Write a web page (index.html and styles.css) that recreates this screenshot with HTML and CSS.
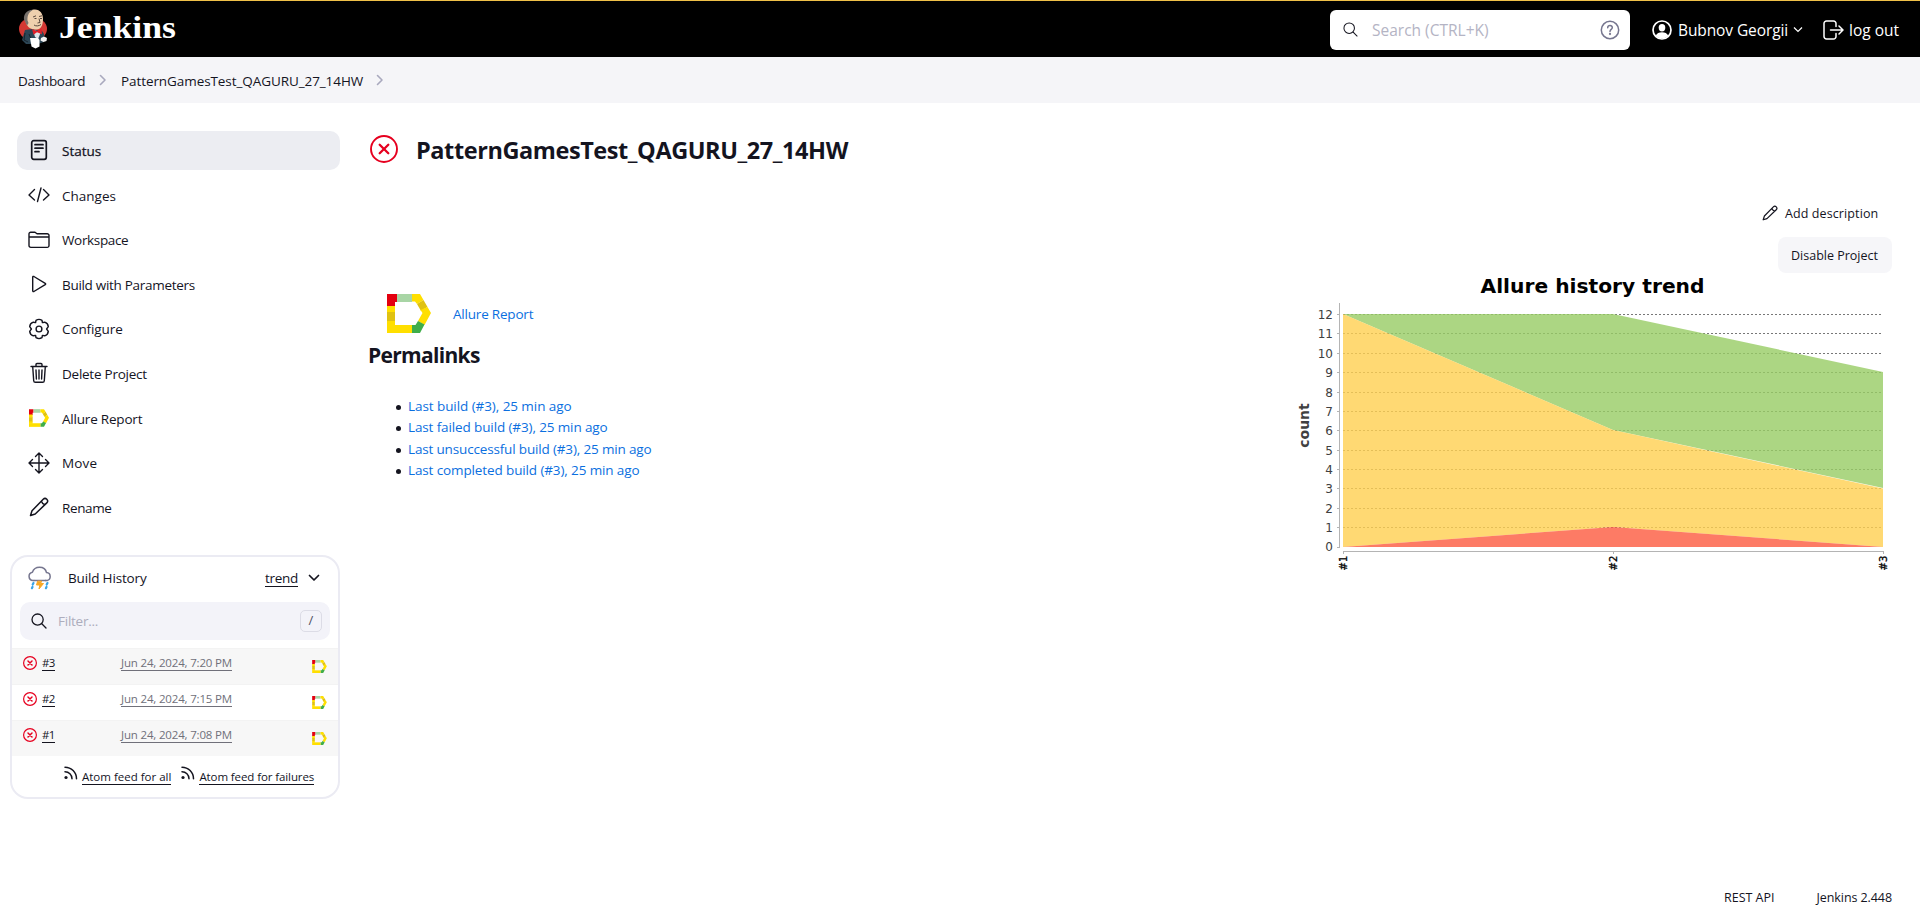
FILE: index.html
```html
<!DOCTYPE html>
<html lang="en">
<head>
<meta charset="utf-8">
<title>PatternGamesTest_QAGURU_27_14HW [Jenkins]</title>
<link rel="stylesheet" href="styles.css">
</head>
<body>
<svg class="defs" width="0" height="0" aria-hidden="true">
  <symbol id="allure" viewBox="0 0 44 39">
    <path d="M0 0h10v8H8v5H0z" fill="#e3000f"/>
    <path d="M10 0h15v8H10z" fill="#a8d5a5"/>
    <path d="M25 0h8l3.500 6-6.500 4-2-2.500h-3z" fill="#ffdf00"/>
    <path d="M36.500 6l4 7-6.500 4-4-7z" fill="#e0c211"/>
    <path d="M40.500 13l3.500 6-6.500 12-6.500-4 4.500-8-2-3z" fill="#ffdf00"/>
    <path d="M31 27l6.500 3.500-4.500 8.500h-8v-8h3.500z" fill="#3fae49"/>
    <path d="M0 31h25v8H0z" fill="#ffdf00"/>
    <path d="M0 12h8v7H0zM0 26h8v6H0z" fill="#ffdf00"/>
    <path d="M0 18h8v9H0z" fill="#e0c211"/>
  </symbol>
  <symbol id="failed" viewBox="0 0 28 28">
    <g fill="none" stroke="#e6001f" stroke-linecap="round"><circle cx="14" cy="14" r="13" stroke-width="1.900"/><path d="M9.700 9.700l8.600 8.600M18.300 9.700l-8.600 8.600" stroke-width="2.300"/></g>
  </symbol>
  <symbol id="failed-sm" viewBox="0 0 14 14">
    <g fill="none" stroke="#e6001f" stroke-linecap="round"><circle cx="7" cy="7" r="6.400" stroke-width="1.200"/><path d="M5 5l4 4M9 5l-4 4" stroke-width="1.500"/></g>
  </symbol>
  <symbol id="pencil" viewBox="0 0 20 20">
    <path d="M1.500 18.500l1.500-4.700L14.200 2.300a2.500 2.500 0 0 1 3.600 3.600L6.200 17zM12.400 4.200c.6 1.800 1.600 2.900 3.500 3.500" fill="none" stroke="currentColor" stroke-width="1.500" stroke-linejoin="round"/>
  </symbol>
  <symbol id="lens" viewBox="0 0 16 16">
    <g fill="none" stroke="currentColor" stroke-linecap="round"><circle cx="6.600" cy="6.600" r="5.600"/><path d="M10.800 10.800l4.200 4.200"/></g>
  </symbol>
  <symbol id="rss" viewBox="0 0 14 14">
    <g fill="none" stroke="currentColor" stroke-width="1.500" stroke-linecap="round"><path d="M1 1.200A11.500 11.500 0 0 1 12.500 12.700M1 5.700a7 7 0 0 1 7 7"/></g><circle cx="2" cy="11.500" r="1.600" fill="currentColor"/>
  </symbol>
  <symbol id="crumb" viewBox="0 0 8 12">
    <path d="M1.500 1.500L6 6l-4.500 4.500" fill="none" stroke="#a9a9be" stroke-width="1.600" stroke-linecap="round" stroke-linejoin="round"/>
  </symbol>
</svg>

<header class="top">
  <a class="brand">
    <svg class="butler" width="30" height="41" viewBox="0 0 30 41">
      <ellipse cx="14" cy="20" rx="14" ry="11.500" fill="#d33833"/>
      <path d="M6 21l7-1 10 2 2 3v8l-6 2H7l-4-4z" fill="#2c4656"/>
      <path d="M14 21l2 7 3 2 3-7z" fill="#dfe5ea"/>
      <path d="M8 16C5 11 6.500 3 13 1c7-2 11 3 11 9 0 6-2 10.500-6.500 10.500C13 20.500 10 19.500 8 16z" fill="#efd0ae"/>
      <path d="M14 .8C7 .8 4.500 6 5 10.500L8 16.500l1.500-2.500-1-2.500C8.500 8 8.500 4 14 .8z" fill="#77716c"/>
      <path d="M14 8l3-1.200M20 7.500l3-.7M15.500 9.500h2M21 9.500h2M20 9.500l1 4-2.500.5M15 16c2 1.500 5 1 7-.5" fill="none" stroke="#4a3a32" stroke-width=".9"/>
      <path d="M13 20l4.500 2 5-2.200.5 5.500-5-2-3.500 2.500z" fill="#e0202a"/>
      <path d="M6 24l-1 7 4 2M10 25l2 5" fill="none" stroke="#16242e"/>
      <path d="M11 29h8l1.500 2v6.500l-4 2-4-2z" fill="#fff"/>
      <path d="M22 29l3-1.500 3 1.500-.5 3-3 1-3-1.500z" fill="#f2f2f2"/>
    </svg>
    <span class="brand-name">Jenkins</span>
  </a>
  <div class="search">
    <svg class="search-lens" width="15" height="15"><use href="#lens"/></svg>
    <span class="search-hint">Search (CTRL+K)</span>
    <svg class="help" width="20" height="20" viewBox="0 0 20 20" fill="none" stroke="#76768f" stroke-width="1.500" stroke-linecap="round"><circle cx="10" cy="10" r="8.700"/><path d="M7.700 7.700c.2-3 4.800-2.700 4.600 0C12.200 9.300 10 9.400 10 11.400"/><circle cx="10" cy="14" r=".4"/></svg>
  </div>
  <a class="user">
    <svg width="20" height="20" viewBox="0 0 20 20"><circle cx="10" cy="10" r="9" fill="none" stroke="#fff" stroke-width="1.700"/><ellipse cx="10" cy="7.700" rx="3.300" ry="3.700" fill="#fff"/><path d="M3.800 15.500c1.500-4.500 10.900-4.500 12.400 0-3 4-9.400 4-12.400 0z" fill="#fff"/></svg>
    <span class="user-name">Bubnov Georgii</span>
    <svg class="user-caret" width="10" height="7" viewBox="0 0 10 7"><path d="M1 1.500l4 4 4-4" fill="none" stroke="#fff" stroke-width="1.200"/></svg>
  </a>
  <a class="logout">
    <svg width="21" height="20" viewBox="0 0 21 20" fill="none" stroke="#fff" stroke-width="1.500" stroke-linecap="round" stroke-linejoin="round"><path d="M13 6.500V3.500A2.500 2.500 0 0 0 10.500 1H3.500A2.500 2.500 0 0 0 1 3.500v13A2.500 2.500 0 0 0 3.500 19h7a2.500 2.500 0 0 0 2.500-2.500v-3M7.500 10h12M16 6l4 4-4 4"/></svg>
    <span class="logout-name">log out</span>
  </a>
</header>

<nav class="crumbs">
  <a class="crumb-home">Dashboard</a>
  <svg class="sep" width="8" height="12"><use href="#crumb"/></svg>
  <a class="crumb-job">PatternGamesTest_QAGURU_27_14HW</a>
  <svg class="sep" width="8" height="12"><use href="#crumb"/></svg>
</nav>

<div class="body">
  <aside class="side">
    <ul class="tasks">
      <li class="task active"><svg class="ti" viewBox="0 0 22 22"><rect x="3.700" y="1.700" width="14.600" height="18.600" rx="2"/><path d="M7 5.700h8M7 9.200h8M7 12.700h4"/></svg><span class="status">Status</span></li>
      <li class="task"><svg class="ti" viewBox="0 0 22 22"><path d="M6.500 5.500L1 11l5.500 5M15.500 5.500L21 11l-5.500 5M13 4L9.500 17.500"/></svg><span class="changes">Changes</span></li>
      <li class="task"><svg class="ti" viewBox="0 0 22 22"><path d="M1 16.500V5a1.700 1.700 0 0 1 1.700-1.700H7l2 1.500h10.200A1.800 1.800 0 0 1 21 6.600v10a1.800 1.800 0 0 1-1.800 1.800H2.800A1.800 1.800 0 0 1 1 16.500zM1 8h20"/></svg><span class="workspace">Workspace</span></li>
      <li class="task"><svg class="ti" viewBox="0 0 22 22"><path d="M4.700 4.200v13.600c0 .8.600 1 1.200.7l11.300-6.800c.6-.4.600-1 0-1.400L5.900 3.500c-.6-.3-1.200 0-1.200.7z"/></svg><span class="params">Build with Parameters</span></li>
      <li class="task"><svg class="ti" viewBox="0 0 22 22"><path d="M8 2.300Q11 .5 14 2.300L14.400 4.600 16.700 4.200Q20 5.200 20.300 8.600L18.600 11 20.300 13.400Q20 16.800 16.700 17.800L14.400 17.400 14 19.700Q11 21.500 8 19.700L7.600 17.400 5.300 17.800Q2 16.800 1.700 13.400L3.400 11 1.700 8.600Q2 5.200 5.300 4.200L7.600 4.600z"/><circle cx="11" cy="11" r="2.900"/></svg><span class="configure">Configure</span></li>
      <li class="task"><svg class="ti" viewBox="0 0 22 22"><path d="M3 4.500h16M4.700 4.500l1 14.200a1.700 1.700 0 0 0 1.700 1.600h7.200a1.700 1.700 0 0 0 1.700-1.600l1-14.200M8 4.300V2.500A1 1 0 0 1 9 1.500h4a1 1 0 0 1 1 1v1.800M11 8v9M8 8l.4 9M14 8l-.4 9"/></svg><span class="delete">Delete Project</span></li>
      <li class="task"><svg class="ti-allure" width="20" height="18"><use href="#allure"/></svg><span class="allure">Allure Report</span></li>
      <li class="task"><svg class="ti" viewBox="0 0 22 22"><path d="M11 1.500v19M1.500 11h19M7.500 4.500L11 1l3.500 3.500M7.500 17.500L11 21l3.500-3.500M4.500 7.500L1 11l3.500 3.500M17.500 7.500L21 11l-3.500 3.500"/></svg><span class="move">Move</span></li>
      <li class="task"><svg class="ti-pencil" width="20" height="20"><use href="#pencil"/></svg><span class="rename">Rename</span></li>
    </ul>

    <section class="history">
      <div class="history-head">
        <svg class="storm" width="24" height="24" viewBox="0 0 24 24" fill="none" stroke-linecap="round" stroke-linejoin="round"><path d="M6 14.500H5a4.200 4.200 0 0 1-.6-8.300C5.500 3 8 1.200 11.500 1.200c3.700 0 6.300 2 7 5.400A4 4 0 0 1 19 14.500h-1.500" stroke="#76768f" stroke-width="1.500"/><path d="M6 14.500h12" stroke="#76768f" stroke-width="1.300"/><path d="M9.500 15.500L8.500 19h3.300l-.8 4 4.500-5.500h-3l1-2z" fill="#f9a825" stroke="#f9a825"/><path d="M5.500 17l-.8 1.500M4.500 21l-.6 1.200M19.500 17l-.8 1.500M18.500 21l-.6 1.200" stroke="#3aa5e8" stroke-width="2.200"/></svg>
        <span class="history-title">Build History</span>
        <a class="trend">trend</a>
        <svg class="history-caret" width="12" height="8" viewBox="0 0 12 8"><path d="M1.500 1.500L6 6l4.500-4.500" fill="none" stroke="#14141f" stroke-width="1.700" stroke-linecap="round" stroke-linejoin="round"/></svg>
      </div>
      <div class="filter">
        <svg class="filter-lens" width="16" height="16"><use href="#lens"/></svg>
        <span class="filter-hint">Filter...</span>
        <kbd class="slash">/</kbd>
      </div>
      <div class="build odd"><svg class="ball" width="14" height="14"><use href="#failed-sm"/></svg><a class="num">#3</a><a class="date">Jun 24, 2024, 7:20 PM</a><svg class="badge" width="15" height="13"><use href="#allure"/></svg></div>
      <div class="build"><svg class="ball" width="14" height="14"><use href="#failed-sm"/></svg><a class="num">#2</a><a class="date">Jun 24, 2024, 7:15 PM</a><svg class="badge" width="15" height="13"><use href="#allure"/></svg></div>
      <div class="build odd"><svg class="ball" width="14" height="14"><use href="#failed-sm"/></svg><a class="num">#1</a><a class="date">Jun 24, 2024, 7:08 PM</a><svg class="badge" width="15" height="13"><use href="#allure"/></svg></div>
      <div class="feeds">
        <svg class="rss" width="14" height="14"><use href="#rss"/></svg><a class="feed feed-all">Atom feed for all</a>
        <svg class="rss" width="14" height="14"><use href="#rss"/></svg><a class="feed feed-failures">Atom feed for failures</a>
      </div>
    </section>
  </aside>

  <main class="main">
    <div class="title">
      <svg width="30" height="30" viewBox="-1 -1 30 30"><use href="#failed" width="28" height="28"/></svg>
      <h1 class="job">PatternGamesTest_QAGURU_27_14HW</h1>
    </div>
    <div class="columns">
      <div class="left">
        <div class="report"><svg width="44" height="39"><use href="#allure"/></svg><a class="report-link">Allure Report</a></div>
        <h2 class="perma">Permalinks</h2>
        <ul class="links">
          <li><a class="last">Last build (#3), 25 min ago</a></li>
          <li><a class="last-failed">Last failed build (#3), 25 min ago</a></li>
          <li><a class="last-unsuccessful">Last unsuccessful build (#3), 25 min ago</a></li>
          <li><a class="last-completed">Last completed build (#3), 25 min ago</a></li>
        </ul>
      </div>
      <div class="right">
        <a class="add"><svg width="16" height="16"><use href="#pencil"/></svg><span class="add-text">Add description</span></a>
        <button class="disable">Disable Project</button>
        <svg class="chart" width="600" height="300" viewBox="1292 273 600 300">
          <text class="chart-title" x="1592.500" y="292.500" text-anchor="middle" textLength="224" lengthAdjust="spacingAndGlyphs">Allure history trend</text>
          <path class="grid" d="M1343 314.500h540M1343 333.500h540M1343 353.500h540M1343 372.500h540M1343 392.500h540M1343 411.500h540M1343 430.500h540M1343 450.500h540M1343 469.500h540M1343 488.500h540M1343 508.500h540M1343 527.500h540"/>
          <path d="M1343 314H1613L1883 372V488L1613 430z" fill="#97cc64" fill-opacity=".8"/>
          <path d="M1343 314L1613 430L1883 488.500V547L1613 527L1343 547z" fill="#ffd050" fill-opacity=".8"/>
          <path d="M1343 547L1613 527L1883 547z" fill="#fd5a3e" fill-opacity=".8"/>
          <path class="axis" d="M1339.500 303v244M1343 551.500h541M1343.500 551v3M1613.500 551v3M1883.500 551v3M1337 314.500h3M1337 333.500h3M1337 353.500h3M1337 372.500h3M1337 392.500h3M1337 411.500h3M1337 430.500h3M1337 450.500h3M1337 469.500h3M1337 488.500h3M1337 508.500h3M1337 527.500h3M1337 547.500h3"/>
          <g class="ticks" text-anchor="end">
            <text x="1333" y="319">12</text><text x="1333" y="338">11</text><text x="1333" y="358">10</text><text x="1333" y="377">9</text><text x="1333" y="396.500">8</text><text x="1333" y="416">7</text><text x="1333" y="435">6</text><text x="1333" y="454.500">5</text><text x="1333" y="474">4</text><text x="1333" y="493">3</text><text x="1333" y="512.500">2</text><text x="1333" y="532">1</text><text x="1333" y="551">0</text>
          </g>
          <text class="count" transform="translate(1309 425.500) rotate(-90)" text-anchor="middle">count</text>
          <g class="builds">
            <text transform="translate(1346.500 570.500) rotate(-90)">#1</text><text transform="translate(1616.500 570.500) rotate(-90)">#2</text><text transform="translate(1886.500 570.500) rotate(-90)">#3</text>
          </g>
        </svg>
      </div>
    </div>
  </main>
</div>

<footer class="foot"><a class="rest">REST API</a><a class="version">Jenkins 2.448</a></footer>
</body>
</html>
```

FILE: styles.css
```css
* { box-sizing: border-box; }
body { margin: 0; height: 924px; display: flex; flex-direction: column; background: #fff; color: #14141f; font: 13.5px/20px "Open Sans", "Noto Sans", sans-serif; overflow: hidden; }
ul, h1, h2 { margin: 0; padding: 0; }
a, span, h1, h2, button { white-space: nowrap; }
svg { flex: none; display: block; }
.defs { position: absolute; }

.top { height: 57px; flex: none; display: flex; align-items: center; background: #000; border-top: 1px solid #efc048; color: #fff; font-size: 15.500px; padding: 1px 20px 0 19px; }
.brand { display: flex; align-items: center; flex: 1; }
.butler { margin-right: 10px; }
.brand-name { font: bold 31px/40px "Liberation Serif", serif; transform: scaleX(1.15); transform-origin: left; padding-bottom: 3px; }
.search { width: 300px; height: 40px; display: flex; align-items: center; background: #fff; border-radius: 6px; padding: 0 10px 0 13px; }
.search-lens { color: #14141f; stroke-width: 1.100; margin-top: -1px; }
.search-hint { flex: 1; color: #b4b4c4; margin: 1px 0 0 14px; }
.user { display: flex; align-items: center; margin-left: 22px; width: 171px; }
.user-name { margin: 1px 0 0 6px; width: 115px; letter-spacing: -.1px; }
.logout { display: flex; align-items: center; width: 77px; }
.logout-name { margin: 1px 0 0 5px; }

.crumbs { height: 46px; flex: none; display: flex; align-items: center; background: #f5f5f8; padding: 0 18px; }
.crumbs a { margin-top: 2px; }
.crumb-home { width: 81px; letter-spacing: -.28px; }
.crumb-job { width: 255px; margin-left: 14px; letter-spacing: -.08px; }

.body { flex: 1; display: flex; }
.side { width: 350px; flex: none; padding: 28px 10px 0; }
.tasks { list-style: none; margin: 0 0 0 7px; }
.task { height: 39px; margin-bottom: 5.600px; width: 323px; border-radius: 10px; display: flex; align-items: center; padding-left: 11px; }
.active { background: #ecedf2; }
.task span { margin: 1px 0 0 12px; }
.active span { -webkit-text-stroke: .25px #14141f; }
.workspace { letter-spacing: -.35px; }
.params { letter-spacing: -.3px; }
.configure { letter-spacing: -.1px; }
.delete { letter-spacing: -.25px; }
.allure, .report-link { letter-spacing: -.2px; }
.move { letter-spacing: .15px; }
.rename { letter-spacing: -.38px; }
.ti { width: 22px; height: 22px; fill: none; stroke: #14141f; stroke-width: 1.400; stroke-linecap: round; stroke-linejoin: round; }
.active .ti { stroke-width: 1.700; margin-top: -1px; }
.ti-allure, .ti-pencil { margin: 0 1px; }

.history { width: 330px; height: 244px; margin-top: 28.500px; border: 2px solid #ebebf3; border-radius: 18px; }
.history-head { height: 45px; display: flex; align-items: center; padding: 0 18px 3px 16px; }
.history-title { margin-left: 16px; flex: 1; letter-spacing: -.16px; }
.trend { margin-right: 10px; border-bottom: 1px solid #14141f; line-height: 16px; letter-spacing: -.28px; }
.filter { height: 38px; margin: 0 8px 8px; border-radius: 10px; background: #f3f3f9; display: flex; align-items: center; padding: 0 8px 0 11px; }
.filter-lens { stroke-width: 1.300; }
.filter-hint { flex: 1; margin-left: 11px; color: #adadbd; letter-spacing: -.25px; }
.slash { width: 22px; height: 22px; border: 1px solid #dcdce6; border-radius: 5px; color: #50505f; font: 13px/19px "Open Sans", sans-serif; text-align: center; }
.build { height: 36px; display: flex; padding: 7px 11px 0 11px; border-top: 1px solid #f3f3f3; font-size: 11.500px; line-height: 14px; }
.odd { background: #f7f7f7; }
.num { width: 13px; height: 15px; margin-left: 5px; border-bottom: 1px solid #14141f; letter-spacing: -.6px; }
.date { height: 15px; margin-left: 66px; color: #70707a; border-bottom: 1px solid #70707a; letter-spacing: -.17px; }
.badge { margin: 4px 0 0 auto; }
.feeds { display: flex; padding: 10px 0 0 52px; font-size: 11.500px; line-height: 15px; }
.feed { margin: 3px 10px 0 4px; height: 16px; border-bottom: 1px solid #14141f; }
.feed-failures { letter-spacing: -.1px; }

.main { flex: 1; padding: 31px 28px 0 19px; display: flex; flex-direction: column; }
.title { display: flex; align-items: center; height: 30px; }
.job { font-size: 23.500px; line-height: 30px; margin: 2px 0 0 17px; letter-spacing: -.42px; }
.columns { display: flex; justify-content: space-between; }
.left { padding: 130px 0 0 0; }
.report { display: flex; align-items: center; margin-left: 18px; height: 39px; }
.report-link { margin-left: 22px; }
.perma { font-size: 21px; line-height: 28px; margin: 8px 0 0 -1px; letter-spacing: -.68px; }
.links { list-style: none; padding-left: 27px; margin-top: 27px; line-height: 21.400px; }
.links li { display: flex; align-items: center; }
.links li::before { content: ""; width: 5px; height: 5px; margin: 1px 7px 0 0; border-radius: 50%; background: #14141f; }
.left a { color: #0b6fe0; }
.last { letter-spacing: -.07px; }
.last-failed, .last-completed { letter-spacing: -.12px; }
.last-unsuccessful { letter-spacing: -.16px; }
.right { width: 600px; padding-top: 38px; display: flex; flex-direction: column; align-items: flex-end; }
.add { display: flex; align-items: center; height: 22px; width: 130px; font-size: 12.500px; letter-spacing: .1px; }
.add-text { margin: 1px 0 0 7px; }
.disable { width: 114px; height: 36px; margin-top: 13px; border: 0; border-radius: 8px; background: #f6f6f9; color: #14141f; font: 12.500px/20px "Open Sans", sans-serif; padding: 2px 0 0 13px; text-align: left; }
.chart { font-family: "DejaVu Sans", sans-serif; }
.chart-title { font-size: 20px; font-weight: bold; }
.grid { fill: none; stroke: #777; stroke-width: 1; stroke-dasharray: 2 2; }
.axis { fill: none; stroke: #b4b4b4; }
.ticks { font-size: 12px; fill: #404040; }
.count { font-size: 14px; font-weight: bold; fill: #404040; }
.builds { font-size: 10px; fill: #000; stroke: #000; stroke-width: .3; }

.foot { height: 46px; flex: none; display: flex; justify-content: flex-end; padding: 10px 28px 0; font-size: 12.500px; }
.version { margin-left: 42px; letter-spacing: -.08px; }
```
